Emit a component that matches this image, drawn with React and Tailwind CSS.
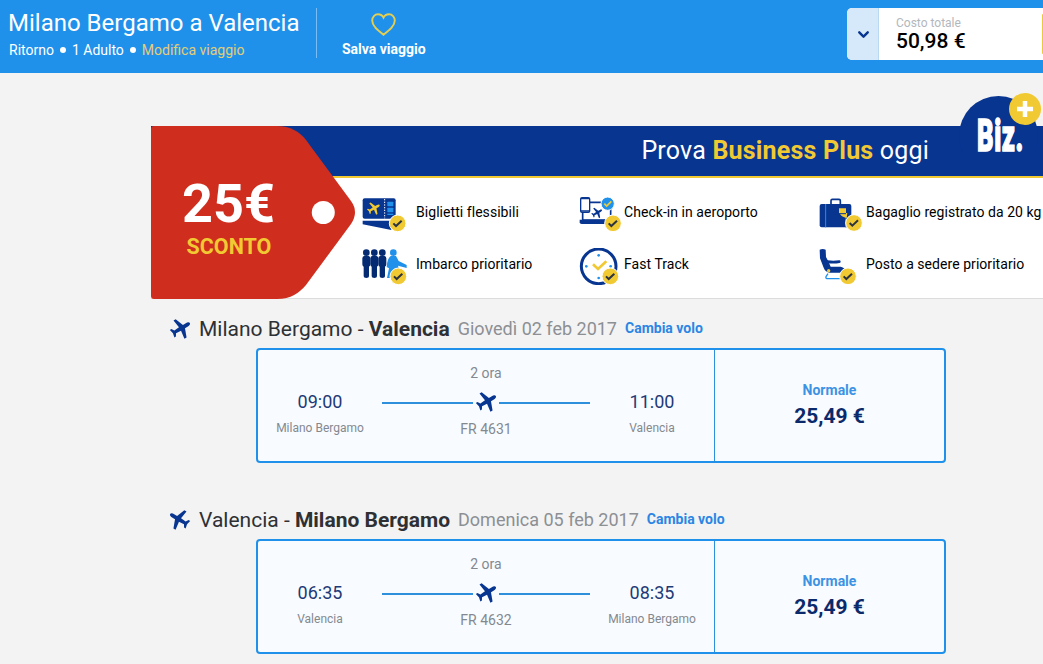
import { Fragment } from "react";
import { ChevronDown } from "lucide-react";

const PLANE_PATH =
  "M11.5 0C11.5-1.3 9.8-2 8-2H4.6L1.3-10.6H-1.2L0-2-5.6-1.6-7.4-4.4H-9.2L-8.2 0-9.2 4.4H-7.4L-5.6 1.6 0 2-1.2 10.6H1.3L4.6 2H8C9.8 2 11.5 1.3 11.5 0Z";

const Plane = ({ flipped, className }) => (
  <svg viewBox="-11 -11 22 22" className={className}>
    <g transform={flipped ? "scale(-1 1)" : undefined}>
      <path d={PLANE_PATH} transform="rotate(-31)" fill="#073590" />
    </g>
  </svg>
);

// Yellow tick shown in the corner of every benefit icon
const Tick = ({ x, y }) => (
  <g transform={`translate(${x} ${y})`}>
    <circle r="25" fill="#f1c933" stroke="#fff" strokeWidth="3" />
    <path d="M-13 0L-5 8L12-8" fill="none" stroke="#2b3440" strokeWidth="6" />
  </g>
);

const TicketIcon = () => (
  <svg viewBox="33 33 138 108" className="h-9 w-[46px]">
    <rect x="38" y="40" width="99" height="61" rx="6" fill="#073590" />
    <path d="M104 42V100" stroke="#fff" strokeWidth="3" strokeDasharray="4 4" />
    <path d={PLANE_PATH} transform="translate(70 71) rotate(-31) scale(1.9)" fill="#f1c933" />
    <rect x="112" y="50" width="18" height="14" rx="2" fill="#2091eb" />
    <rect x="112" y="68" width="18" height="14" rx="2" fill="#2091eb" />
    <path d="M112 88H130" stroke="#2091eb" strokeWidth="4" />
    <path d="M38 107H124V135L38 118Z" fill="#073590" />
    <Tick x={143} y={115} />
  </svg>
);

const BoardingIcon = () => (
  <svg viewBox="33 189 138 111" className="h-[37px] w-[46px]">
    {[49, 73, 97].map((x) => (
      <g key={x} transform={`translate(${x} 0)`} fill="#042a72">
        <circle cy="203" r="10" />
        <path d="M-6 212H6Q12 214 12 220V238Q12 243 8 245V274Q8 279 0 279Q-8 279-8 274V245Q-12 243-12 238V220Q-12 214-6 212Z" />
      </g>
    ))}
    <circle cx="130" cy="203" r="10" fill="#2091eb" />
    <path
      d="M122 213H138Q143 222 146 228L170 240V249L144 242L150 262H128L120 279H111L117 250L110 246Q111 222 122 213Z"
      fill="#2091eb"
    />
    <Tick x={145} y={274} />
  </svg>
);

const CheckInIcon = () => (
  <svg viewBox="27 33 135 108" className="h-9 w-[45px]">
    <path d="M60 52H122V105H38V82" fill="none" stroke="#073590" strokeWidth="5" />
    <rect x="32" y="38" width="27" height="44" rx="4" fill="#fff" stroke="#073590" strokeWidth="4" />
    <path d="M32 41H59M32 78H59" stroke="#073590" strokeWidth="4" />
    <path d="M29 104H126V112Q126 117 120 117H35Q29 117 29 112Z" fill="#073590" />
    <path d={PLANE_PATH} transform="translate(80 84) rotate(-31) scale(1.6)" fill="#073590" />
    <circle cx="113" cy="56" r="20" fill="#2091eb" stroke="#fff" strokeWidth="3" />
    <path d="M103 56L110 63L124 49" fill="none" stroke="#f1c933" strokeWidth="5" />
    <Tick x={129} y={115} />
  </svg>
);

const ClockIcon = () => (
  <svg viewBox="27 189 135 111" className="h-[37px] w-[45px]">
    <circle cx="86" cy="244" r="52" fill="#fff" stroke="#073590" strokeWidth="9" />
    <g fill="#2091eb">
      <circle cx="86" cy="211" r="4" />
      <circle cx="49" cy="244" r="4" />
      <circle cx="122" cy="244" r="4" />
      <circle cx="86" cy="279" r="4" />
    </g>
    <path d="M69 238L84 252L109 229" fill="none" stroke="#f1c933" strokeWidth="8" />
    <Tick x={121} y={274} />
  </svg>
);

const SuitcaseIcon = () => (
  <svg viewBox="27 33 141 108" className="h-9 w-[47px]">
    <path d="M63 60V47Q63 43 67 43H87Q91 43 91 47V60" fill="none" stroke="#073590" strokeWidth="5" />
    <rect x="29" y="57" width="95" height="70" rx="6" fill="#073590" />
    <path d="M47 57V127" stroke="#2091eb" strokeWidth="3" />
    <path d="M107 100V127" stroke="#2091eb" strokeWidth="3" />
    <path d="M87 70H108V84H112L110 100L96 94L87 84Z" fill="#f1c933" />
    <path d="M87 86H108" stroke="#073590" strokeWidth="3" />
    <Tick x={132} y={114} />
  </svg>
);

const SeatIcon = () => (
  <svg viewBox="27 189 141 111" className="h-[37px] w-[47px]">
    <path d="M29 194Q38 190 47 194L48 216Q58 234 62 245H92Q106 248 108 263H60Q46 262 41 248L30 220Z" fill="#073590" />
    <path d="M52 230Q70 233 88 230" stroke="#073590" strokeWidth="8" strokeLinecap="round" fill="none" />
    <path d="M54 266L48 275Q46 281 54 281H96" stroke="#2091eb" strokeWidth="4" fill="none" />
    <circle cx="56" cy="257" r="5" fill="#f1c933" />
    <Tick x={114} y={274} />
  </svg>
);

const benefits = [
  { icon: TicketIcon, label: "Biglietti flessibili" },
  { icon: CheckInIcon, label: "Check-in in aeroporto" },
  { icon: SuitcaseIcon, label: "Bagaglio registrato da 20 kg" },
  { icon: BoardingIcon, label: "Imbarco prioritario" },
  { icon: ClockIcon, label: "Fast Track" },
  { icon: SeatIcon, label: "Posto a sedere prioritario" },
];

const flights = [
  {
    from: "Milano Bergamo",
    to: "Valencia",
    date: "Giovedì 02 feb 2017",
    departs: "09:00",
    arrives: "11:00",
    number: "FR 4631",
  },
  {
    from: "Valencia",
    to: "Milano Bergamo",
    date: "Domenica 05 feb 2017",
    departs: "06:35",
    arrives: "08:35",
    number: "FR 4632",
    inbound: true,
  },
];

const Header = () => (
  <header className="flex h-[73px] items-start bg-[#2091eb] text-white">
    <div className="ml-2 mt-2 flex h-[50px] w-[309px] flex-col border-r border-[#79bdf3]">
      <h1 className="text-2xl leading-[30px]">Milano Bergamo a Valencia</h1>
      <div className="flex items-center text-sm leading-6">
        <span className="ml-px">Ritorno</span>
        <span className="mx-[6px] size-[6px] rounded-full bg-white" />
        <span>1 Adulto</span>
        <span className="mx-[6px] size-[6px] rounded-full bg-white" />
        <a className="text-[#e6cd72]">Modifica viaggio</a>
      </div>
    </div>
    <button className="ml-[25px] mt-[13px] flex flex-col items-center">
      <svg viewBox="0 0 25 23" className="h-[23px] w-[25px]">
        <path
          d="M12.5 21.7C6 16.7 1.2 12.8 1.2 7.6C1.2 3.9 3.8 1.3 7 1.3C9.5 1.3 11.6 2.7 12.5 4.6C13.4 2.7 15.5 1.3 18 1.3C21.2 1.3 23.8 3.9 23.8 7.6C23.8 12.8 19 16.7 12.5 21.7Z"
          fill="none"
          stroke="#e6cf4e"
          strokeWidth="1.9"
        />
      </svg>
      <span className="mt-1 text-sm font-bold leading-[18px]">Salva viaggio</span>
    </button>
    <div className="ml-auto mt-2 flex h-[52px] w-[196px] overflow-hidden rounded-l-[5px] bg-white">
      <div className="flex w-8 items-center justify-center border-r border-[#b9d9f3] bg-[#d5e9fa] pl-px">
        <ChevronDown className="size-[17px] text-[#073590]" strokeWidth={3.4} />
      </div>
      <div className="ml-[17px] pt-[7px]">
        <p className="text-xs leading-4 text-[#b3b7bc]">Costo totale</p>
        <p className="text-[21px] font-medium leading-[21px] text-black">50,98 €</p>
      </div>
      <div className="ml-auto mt-[6px] h-10 w-px rounded-l-sm bg-[#f1c933]" />
    </div>
  </header>
);

const Promo = () => (
  <section className="relative ml-[151px] mt-[53px] h-[173px] border-b border-[#dcdcdc] bg-white">
    <div className="flex h-[52px] justify-end border-b-2 border-[#f1c933] bg-[#073590] pr-[114px]">
      <h2 className="text-[25px] leading-[50px] tracking-[0.2px] text-white">
        Prova <b className="text-[#f1c933]">Business Plus</b> oggi
      </h2>
    </div>
    <div className="ml-[210px] grid grid-cols-[218px_240px_230px] gap-y-4 pt-[18px]">
      {benefits.map(({ icon: Icon, label }, i) => (
        <div key={label} className="flex h-9 items-start">
          <span className={["w-[55px]", "w-[45px]", "w-[47px]"][i % 3]}>
            <Icon />
          </span>
          <span className="whitespace-nowrap text-sm leading-8 tracking-[0.05px] text-black">{label}</span>
        </div>
      ))}
    </div>

    {/* Price tag over the left end of the banner */}
    <div className="absolute left-0 top-0 h-[173px] w-[205px]">
      <svg viewBox="0 0 205 173" className="absolute inset-0 size-full">
        <path
          d="M3 0H126C139 0 149 6 155 14L200 75Q208 86 200 98L155 159C148 167 140 173 126 173H3Q0 173 0 170V3Q0 0 3 0Z"
          fill="#cf2e1e"
        />
        <circle cx="172.300" cy="86.500" r="11.500" fill="#fff" />
      </svg>
      <div className="relative w-[156px] pt-[50px] text-center font-bold">
        <p className="-ml-px text-[54px] leading-[56px] text-white">25€</p>
        <p className="mt-px text-[21.5px] leading-[27px] text-[#f1c933]">SCONTO</p>
      </div>
    </div>

    {/* Business Plus badge */}
    <div className="absolute right-[5px] top-[-30px] h-[56px] w-[79px] overflow-hidden">
      <div className="size-[79px] rounded-full bg-[#073590]" />
    </div>
    <span className="absolute left-[826px] top-[-13px] origin-left scale-x-[0.57] text-[45px] font-black leading-[46px] tracking-[1px] text-white [-webkit-text-stroke:1.5px_white]">
      Biz.
    </span>
    <svg viewBox="0 0 32 32" className="absolute right-[2px] top-[-33px] size-8">
      <circle cx="16" cy="16" r="16" fill="#f1c933" />
      <path d="M16 8V24M8 16H24" stroke="#fff" strokeWidth="4.5" />
    </svg>
  </section>
);

const Stop = ({ time, place }) => (
  <div className="w-[124px] pt-10 text-center">
    <p className="text-lg leading-6 text-[#1d3a78]">{time}</p>
    <p className="mt-1 text-xs leading-5 text-[#84898f]">{place}</p>
  </div>
);

const Flight = ({ flight }) => (
  <Fragment>
    <div className="ml-[169px] flex h-[49px] items-center pt-[11px]">
      <Plane flipped={flight.inbound} className="size-[22px]" />
      <h3 className="ml-2 whitespace-pre text-[21px] leading-6 text-[#2e3033]">
        {flight.from} - <b>{flight.to}</b>
      </h3>
      <span className="ml-2 text-lg leading-6 text-[#8c8f94]">{flight.date}</span>
      <a className="ml-2 pb-0.5 text-sm font-bold leading-6 text-[#2b86e3]">Cambia volo</a>
    </div>
    <article className="ml-[256px] flex h-[115px] w-[690px] rounded-[4px] border-2 border-[#2091eb] bg-[#f8fbff]">
      <div className="flex w-[457px] border-r border-[#2e8fdc]">
        <Stop time={flight.departs} place={flight.from} />
        <div className="w-[208px] pt-[14px] text-center text-sm leading-[18px] text-[#84898f]">
          <p>2 ora</p>
          <div className="flex h-[38px] items-center justify-between pt-[3px]">
            <span className="h-[2px] w-[91px] bg-[#2e8fdc]" />
            <Plane className="mb-0.5 size-[22px]" />
            <span className="h-[2px] w-[91px] bg-[#2e8fdc]" />
          </div>
          <p>{flight.number}</p>
        </div>
        <Stop time={flight.arrives} place={flight.to} />
      </div>
      <div className="flex-1 pt-[30px] text-center font-bold">
        <p className="text-sm leading-5 text-[#3d93e3]">Normale</p>
        <p className="text-[21px] leading-8 text-[#0b2a6b]">25,49 €</p>
      </div>
    </article>
  </Fragment>
);

const App = () => (
  <div className="h-[664px] w-[1043px] overflow-hidden bg-[#f3f3f3] font-['Roboto',sans-serif]">
    <Header />
    <main>
      <Promo />
      {flights.map((flight) => (
        <div key={flight.number} className="h-[191px]">
          <Flight flight={flight} />
        </div>
      ))}
    </main>
  </div>
);

export default App;
